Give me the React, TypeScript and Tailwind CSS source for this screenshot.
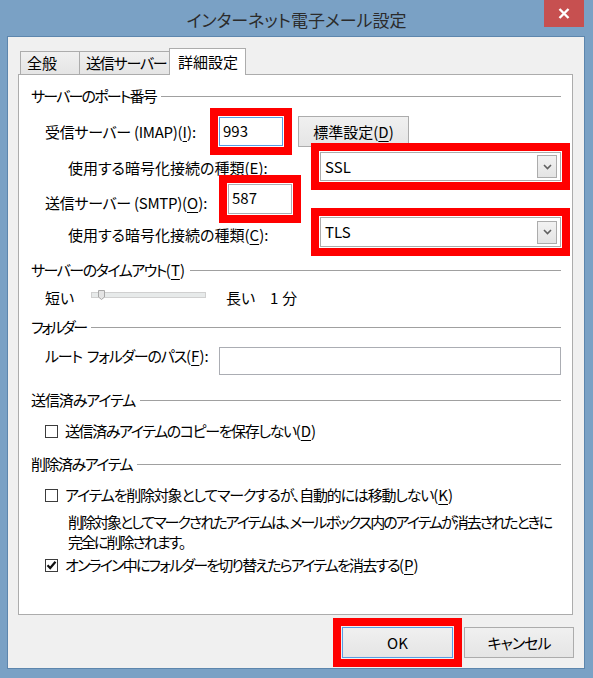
import type { ReactNode } from "react";

const FONT = "font-['Noto_Sans_CJK_JP',sans-serif] [font-feature-settings:'palt']";

function Mn({ children }: { children: ReactNode }) {
  return <span className="underline decoration-1 underline-offset-[3px]">{children}</span>;
}

// "(X)" access key suffix, kept at normal spacing
function Key({ k, colon = false }: { k: string; colon?: boolean }) {
  return (
    <span className="tracking-normal">
      (<Mn>{k}</Mn>){colon ? ":" : ""}
    </span>
  );
}

function GroupTitle({ children, className = "", tight = "" }: { children: ReactNode; className?: string; tight?: string }) {
  return (
    <div className={`flex h-[20px] items-center gap-[5px] ${className}`}>
      <span className={`whitespace-nowrap ${tight}`}>{children}</span>
      <span className="h-px flex-1 bg-[#a0a0a0]" />
    </div>
  );
}

// red annotation frame drawn over a control
function Marked({ children, className = "" }: { children: ReactNode; className?: string }) {
  return (
    <div className={`relative ${className}`}>
      {children}
      <span className="pointer-events-none absolute -inset-[9px] border-[8px] border-[#ff0000]" />
    </div>
  );
}

function Combo({ value, className = "" }: { value: string; className?: string }) {
  return (
    <div className={`flex w-[241px] items-center justify-between border border-[#acacac] bg-white pl-[4px] pr-[3px] ${className}`}>
      <span>{value}</span>
      <span className="flex h-[23px] w-[20px] items-center justify-center border border-[#acacac] bg-gradient-to-b from-[#f2f2f2] to-[#e4e4e4]">
        <svg width="9" height="6" viewBox="0 0 9 6">
          <path d="M1 1l3.5 3.5L8 1" stroke="#606060" strokeWidth="1.6" fill="none" />
        </svg>
      </span>
    </div>
  );
}

function Check({ checked = false }: { checked?: boolean }) {
  return (
    <span className="flex h-[13px] w-[13px] shrink-0 items-center justify-center border border-[#3c3c3c] bg-white">
      {checked ? (
        <svg width="11" height="10" viewBox="0 0 11 10">
          <path d="M1.5 5.2l2.7 2.8L9.5 1.8" stroke="#111" strokeWidth="2.2" fill="none" />
        </svg>
      ) : null}
    </span>
  );
}

function Button({ children, primary = false }: { children: ReactNode; primary?: boolean }) {
  return (
    <div
      className={`flex h-[31px] items-center justify-center border bg-gradient-to-b from-[#f0f0f0] to-[#e5e5e5] ${
        primary ? "w-[111px] border-[#569de5]" : "w-[110px] border-[#acacac]"
      }`}
    >
      {children}
    </div>
  );
}

export default function App() {
  return (
    <div className={`flex h-[678px] w-[593px] flex-col bg-[#7aa1c5] text-[15px] leading-[20px] text-black ${FONT}`}>
      {/* title bar */}
      <div className="flex h-[36px] shrink-0 pl-[49px] pr-[9px]">
        <div className="flex-1 pt-[8px] text-center text-[17px] leading-[24px] text-[#2b2b2b]">
          インターネット電子メール設定
        </div>
        <div className="flex h-[27px] w-[40px] items-center justify-center bg-[#c75050]">
          <svg width="12" height="11" viewBox="0 0 12 11">
            <path d="M1.5 1l9 9M10.5 1l-9 9" stroke="#fff" strokeWidth="2.4" />
          </svg>
        </div>
      </div>

      {/* client area */}
      <div className="ml-[7px] mr-[8px] flex h-[633px] flex-col border border-[#5d86ad] bg-[#f0f0f0] pl-[10px] pr-[11px] pt-[11px]">
        <div className="flex h-[26px] items-end pl-[2px]">
          <div className="h-[23px] w-[60px] whitespace-nowrap border border-b-0 border-[#acacac] bg-gradient-to-b from-[#f0f0f0] to-[#e5e5e5] pl-[6px] leading-[22px]">
            全般
          </div>
          <div className="-ml-px h-[23px] w-[91px] whitespace-nowrap border border-b-0 border-[#acacac] bg-gradient-to-b from-[#f0f0f0] to-[#e5e5e5] pl-[6px] leading-[22px] tracking-[-1.2px]">
            送信サーバー
          </div>
          <div className="relative z-10 -mb-px -ml-px h-[27px] w-[77px] whitespace-nowrap border border-b-0 border-[#acacac] bg-white pl-[8px] leading-[26px]">
            詳細設定
          </div>
        </div>

        <div className="flex h-[541px] flex-col border border-[#acacac] bg-white pl-[12px] pr-[11px] pt-[11px]">
          <GroupTitle tight="tracking-[-1.8px]">サーバーのポート番号</GroupTitle>

          <div className="mt-[10px] flex h-[31px] items-start pl-[14px]">
            <span className="mt-[6px] w-[174px] whitespace-nowrap tracking-[-0.3px]">
              受信サーバー (IMAP)<Key k="I" colon />
            </span>
            <Marked className="mt-px">
              <div className="h-[29px] w-[64px] border border-[#569de5] bg-white pl-[3px] pt-[3px]">993</div>
            </Marked>
            <div className="ml-[15px] flex h-[31px] w-[111px] items-center justify-center border border-[#acacac] bg-gradient-to-b from-[#f0f0f0] to-[#e5e5e5]">
              <span>
                標準設定<Key k="D" />
              </span>
            </div>
          </div>

          <div className="mt-[5px] flex h-[29px] items-start pl-[37px]">
            <span className="mt-[6px] w-[254px] whitespace-nowrap">
              使用する暗号化接続の種類<Key k="E" colon />
            </span>
            <Marked>
              <Combo value="SSL" className="h-[29px]" />
            </Marked>
          </div>

          <div className="mt-[3px] flex h-[30px] items-start pl-[14px]">
            <span className="mt-[9px] w-[183px] whitespace-nowrap tracking-[-0.3px]">
              送信サーバー (SMTP)<Key k="O" colon />
            </span>
            <Marked>
              <div className="h-[30px] w-[64px] border border-[#abadb3] bg-white pl-[3px] pt-[3px]">587</div>
            </Marked>
          </div>

          <div className="mt-[3px] flex h-[29px] items-start pl-[37px]">
            <span className="mt-[8px] w-[254px] whitespace-nowrap">
              使用する暗号化接続の種類<Key k="C" colon />
            </span>
            <Marked>
              <Combo value="TLS" className="h-[30px]" />
            </Marked>
          </div>

          <GroupTitle className="mt-[14px]" tight="tracking-[-1.5px]">
            サーバーのタイムアウト<Key k="T" />
          </GroupTitle>

          <div className="mt-[8px] flex h-[20px] items-start pl-[14px]">
            <span className="w-[46px]">短い</span>
            <div className="relative mt-[4px] h-[6px] w-[115px] border border-[#d0d0d0] bg-[#e7eaea]">
              <svg className="absolute left-[6px] top-[-3px]" width="7" height="10" viewBox="0 0 7 10">
                <path d="M0.5 0.5h6v6.5L3.5 9.5 0.5 7z" fill="#e4e4e4" stroke="#a8a8a8" />
              </svg>
            </div>
            <span className="ml-[20px] w-[44px]">長い</span>
            <span>1</span>
            <span className="ml-[4px]">分</span>
          </div>

          <GroupTitle className="mt-[9px]" tight="tracking-[-2.4px]">
            フォルダー
          </GroupTitle>

          <div className="mt-[10px] flex h-[28px] items-start pl-[14px]">
            <span className="w-[174px] whitespace-nowrap leading-[17px] tracking-[-1.2px]">
              ルート<span className="inline-block w-[5px]" />フォルダーのパス<Key k="F" colon />
            </span>
            <div className="h-[28px] w-[343px] border border-[#abadb3] bg-white" />
          </div>

          <GroupTitle className="mt-[15px]" tight="tracking-[-1.1px]">
            送信済みアイテム
          </GroupTitle>

          <div className="mt-[11px] flex h-[20px] items-center gap-[7px] pl-[14px]">
            <Check />
            <span className="whitespace-nowrap tracking-[-1.4px]">
              送信済みアイテムのコピーを保存しない<Key k="D" />
            </span>
          </div>

          <GroupTitle className="mt-[13px]" tight="tracking-[-1.5px]">
            削除済みアイテム
          </GroupTitle>

          <div className="mt-[11px] flex h-[20px] items-center gap-[7px] pl-[14px]">
            <Check />
            <span className="whitespace-nowrap tracking-[-1.2px]">
              アイテムを削除対象としてマークするが、自動的には移動しない<Key k="K" />
            </span>
          </div>

          <p className="mt-[7px] whitespace-nowrap pl-[37px] tracking-[-2px]">
            削除対象としてマークされたアイテムは、メールボックス内のアイテムが消去されたときに
            <br />
            完全に削除されます。
          </p>

          <div className="mt-[3px] flex h-[20px] items-center gap-[7px] pl-[14px]">
            <Check checked />
            <span className="whitespace-nowrap tracking-[-1.8px]">
              オンライン中にフォルダーを切り替えたらアイテムを消去する<Key k="P" />
            </span>
          </div>
        </div>

        <div className="-mr-px mt-[12px] flex justify-end gap-[11px]">
          <Marked>
            <Button primary>OK</Button>
          </Marked>
          <Button>
            <span className="tracking-[-1px]">キャンセル</span>
          </Button>
        </div>
      </div>
    </div>
  );
}
